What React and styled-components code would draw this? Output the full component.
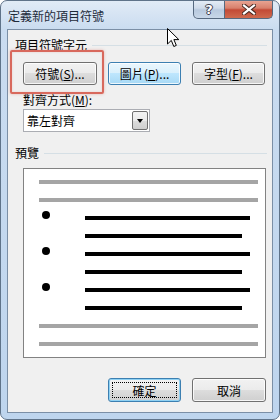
import React from "react";
import styled, { createGlobalStyle } from "styled-components";

const GlobalStyle = createGlobalStyle`
  body {
    margin: 0;
    background: #ffffff;
    font-family: "Noto Sans CJK TC", "Liberation Sans", sans-serif;
    font-size: 12px;
    color: #000;
  }
`;

//window frame
const Window = styled.div`
  position: relative;
  width: 280px;
  height: 420px;
  box-sizing: border-box;
  border: 1px solid #5f7389;
  border-radius: 7px;
  background: linear-gradient(#e1ebf6, #cadcf0 28px, #bed5ee);
  display: flex;
  flex-direction: column;
  padding: 0 6px 6px 6px;
  overflow: hidden;
`;

const TitleBar = styled.div`
  height: 28px;
  display: flex;
  justify-content: space-between;
  align-items: flex-start;
`;

const Title = styled.div`
  margin: 7px 0 0 1px;
  line-height: 16px;
  font-size: 12px;
  color: #1e2b3a;
`;

const Controls = styled.div`
  display: flex;
  margin-top: -1px;
`;

const CaptionButton = styled.div`
  width: ${(props) => props.width}px;
  height: 19px;
  box-sizing: border-box;
  border: 1px solid #56697f;
  border-top: none;
  display: flex;
  align-items: center;
  justify-content: center;
  background: ${(props) =>
    props.close
      ? "linear-gradient(#eaa897, #d8806c 45%, #c34a36 55%, #cf6a4e)"
      : "linear-gradient(#e6eef7, #cfdbea 45%, #b8c9de 55%, #c8d7e8)"};
  border-radius: ${(props) => (props.close ? "0 0 5px 0" : "0 0 0 5px")};
  border-left: ${(props) => (props.close ? "none" : "1px solid #56697f")};
`;

const HelpGlyph = styled.span`
  font-family: "DejaVu Sans", sans-serif;
  font-weight: bold;
  font-size: 13px;
  line-height: 13px;
  color: #ffffff;
  text-shadow: 0 0 1px #334, 1px 0 0 #445, -1px 0 0 #445, 0 1px 0 #445,
    0 -1px 0 #445;
`;

const Client = styled.div`
  flex: 1;
  border: 1px solid #7b8fa6;
  background: #f0f0f0;
  padding: 8px 5px 0 7px;
  display: flex;
  flex-direction: column;
`;

const GroupHeader = styled.div`
  display: flex;
  align-items: center;
  gap: 5px;
  line-height: 14px;
  margin-top: ${(props) => props.top || 0}px;
  &::after {
    content: "";
    flex: 1;
    height: 1px;
    background: #d5dfe5;
  }
`;

const ButtonRow = styled.div`
  display: flex;
  gap: 11px;
  margin: 10px 0 0 8px;
`;

const ButtonWrap = styled.div`
  position: relative;
`;

const Highlight = styled.div`
  position: absolute;
  left: -13px;
  top: -12px;
  right: -7px;
  bottom: -9px;
  border: 2px solid #d8695d;
  border-radius: 2px;
  box-shadow: 0 0 3px rgba(216, 105, 93, 0.45),
    inset 0 0 2px rgba(216, 105, 93, 0.3);
  pointer-events: none;
`;

const Button = styled.div`
  position: relative;
  width: ${(props) => props.width || 74}px;
  height: ${(props) => props.height || 23}px;
  box-sizing: border-box;
  border: 1px solid ${(props) => (props.hot || props.primary ? "#3c7fb1" : "#707070")};
  border-radius: 3px;
  display: flex;
  align-items: center;
  justify-content: center;
  font-size: 12px;
  color: #000;
  background: ${(props) =>
    props.hot
      ? "linear-gradient(#eaf6fd, #d9f0fc 50%, #bee6fd 50%, #a7d9f5)"
      : "linear-gradient(#f2f2f2, #ebebeb 50%, #dddddd 50%, #cfcfcf)"};
  box-shadow: inset 0 0 0 1px
    ${(props) => (props.primary ? "#8fd1f3" : "rgba(255,255,255,0.8)")};
  ${(props) =>
    props.primary &&
    `&::after {
      content: "";
      position: absolute;
      inset: 3px;
      border: 1px dotted #000;
    }`}
`;

const FieldLabel = styled.div`
  margin: 8px 0 0 8px;
  line-height: 14px;
`;

const Select = styled.div`
  margin: 2px 0 0 8px;
  width: 127px;
  height: 23px;
  box-sizing: border-box;
  border: 1px solid #abadb3;
  background: #ffffff;
  display: flex;
  align-items: center;
  justify-content: space-between;
  padding-left: 3px;
`;

const DropButton = styled.div`
  width: 16px;
  height: 19px;
  margin-right: 1px;
  box-sizing: border-box;
  border: 1px solid #707070;
  border-radius: 2px;
  background: linear-gradient(#f2f2f2, #ebebeb 50%, #dddddd 50%, #cfcfcf);
  display: flex;
  align-items: center;
  justify-content: center;
  &::after {
    content: "";
    border-left: 3.5px solid transparent;
    border-right: 3.5px solid transparent;
    border-top: 4px solid #000;
  }
`;

const PreviewBox = styled.div`
  margin: 8px 0 0 8px;
  width: 243px;
  height: 190px;
  box-sizing: border-box;
  border: 1px solid #828282;
  background: #ffffff;
  padding: 4px 7px 4px 15px;
`;

const PreviewRow = styled.div`
  height: 18px;
  display: flex;
  align-items: flex-start;
`;

const Bullet = styled.div`
  width: 46px;
  flex: none;
  &::before {
    content: "";
    display: block;
    width: 8px;
    height: 8px;
    margin: 2px 0 0 3px;
    border-radius: 50%;
    background: #000;
  }
`;

const Line = styled.div`
  margin-top: 7px;
  height: 4px;
  width: ${(props) => props.width}px;
  margin-left: ${(props) => props.indent || 0}px;
  background: ${(props) => (props.dark ? "#000" : "#a5a5a5")};
`;

const Footer = styled.div`
  display: flex;
  justify-content: flex-end;
  gap: 11px;
  margin: 20px 1px 0 0;
`;

const Cursor = styled.svg`
  position: absolute;
  left: 166px;
  top: 27px;
`;

const ROWS = [
  { type: "gray" },
  { type: "gray" },
  { type: "text", bullet: true, width: 165 },
  { type: "text", width: 157 },
  { type: "text", bullet: true, width: 165 },
  { type: "text", width: 157 },
  { type: "text", bullet: true, width: 165 },
  { type: "text", width: 157 },
  { type: "gray" },
  { type: "gray" },
];

function App() {
  return (
    <>
      <GlobalStyle />
      <Window>
        <TitleBar>
          <Title>定義新的項目符號</Title>
          <Controls>
            <CaptionButton width={32}>
              <HelpGlyph>?</HelpGlyph>
            </CaptionButton>
            <CaptionButton width={48} close>
              <svg width="14" height="11" viewBox="0 0 14 11">
                <path
                  d="M2 1.5 L12 9.5 M12 1.5 L2 9.5"
                  stroke="#4a2a22"
                  strokeWidth="4.2"
                  strokeLinecap="square"
                />
                <path
                  d="M2 1.5 L12 9.5 M12 1.5 L2 9.5"
                  stroke="#ffffff"
                  strokeWidth="2.2"
                  strokeLinecap="square"
                />
              </svg>
            </CaptionButton>
          </Controls>
        </TitleBar>
        <Client>
          <GroupHeader>項目符號字元</GroupHeader>
          <ButtonRow>
            <ButtonWrap>
              <Button>
                符號(<u>S</u>)...
              </Button>
              <Highlight />
            </ButtonWrap>
            <Button width={73} hot>
              圖片(<u>P</u>)...
            </Button>
            <Button width={73}>
              字型(<u>F</u>)...
            </Button>
          </ButtonRow>
          <FieldLabel>
            對齊方式(<u>M</u>):
          </FieldLabel>
          <Select>
            <span>靠左對齊</span>
            <DropButton />
          </Select>
          <GroupHeader top={14}>預覽</GroupHeader>
          <PreviewBox>
            {ROWS.map((row, i) =>
              row.type === "gray" ? (
                <PreviewRow key={i}>
                  <Line width={219} />
                </PreviewRow>
              ) : (
                <PreviewRow key={i}>
                  {row.bullet ? <Bullet /> : null}
                  <Line dark width={row.width} indent={row.bullet ? 0 : 46} />
                </PreviewRow>
              )
            )}
          </PreviewBox>
          <Footer>
            <Button width={73} height={24} primary>
              確定
            </Button>
            <Button width={74} height={24}>
              取消
            </Button>
          </Footer>
        </Client>
        <Cursor width="13" height="20" viewBox="0 0 13 20">
          <path
            d="M0.5 0.5 L0.5 16 L4.3 12.4 L6.8 18.5 L9.3 17.4 L6.9 11.6 L11.8 11.6 Z"
            fill="#ffffff"
            stroke="#000000"
            strokeWidth="1"
            strokeLinejoin="round"
          />
        </Cursor>
      </Window>
    </>
  );
}

export default App;
